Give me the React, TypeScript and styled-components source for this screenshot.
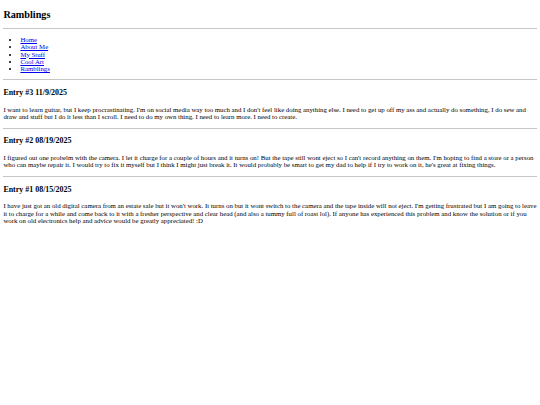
import React from "react";
import styled, { createGlobalStyle } from "styled-components";

const Global = createGlobalStyle`
  html, body { margin: 0; padding: 0; background: #ffffff; }
  body { font-family: "Liberation Serif", "Times New Roman", serif; color: #000; }
`;

const Page = styled.main`
  padding: 0 3.4px;
  font-size: 6.8px;
  line-height: 1.08;
  display: flow-root;
`;

const Title = styled.h2`
  font-size: 10.2px;
  font-weight: bold;
  margin: 8.5px 0;
`;

const Rule = styled.hr`
  border: none;
  border-top: 1px solid #c6c6c6;
  margin: 3.4px 0;
  height: 0;
`;

const NavList = styled.ul`
  margin: 6.9px 0;
  padding-left: 17px;
  list-style: disc;
`;

const NavItem = styled.li``;

const NavLink = styled.a`
  color: #0000ee;
  text-decoration: underline;
`;

const EntryTitle = styled.h3`
  font-size: 7.96px;
  font-weight: bold;
  margin: 8.9px 0 8.1px;
`;

const EntryText = styled.p`
  margin: 6.9px 0;
`;

const links = ["Home", "About Me", "My Stuff", "Cool Art", "Ramblings"];

const entries = [
  {
    title: "Entry #3 11/9/2025",
    text: "I want to learn guitar, but I keep procrastinating. I'm on social media way too much and I don't feel like doing anything else. I need to get up off my ass and actually do something, I do sew and draw and stuff but I do it less than I scroll. I need to do my own thing. I need to learn more. I need to create.",
  },
  {
    title: "Entry #2 08/19/2025",
    text: "I figured out one probelm with the camera. I let it charge for a couple of hours and it turns on! But the tape still wont eject so I can't record anything on them. I'm hoping to find a store or a person who can maybe repair it. I would try to fix it myself but I think I might just break it. It would probably be smart to get my dad to help if I try to work on it, he's great at fixing things.",
  },
  {
    title: "Entry #1 08/15/2025",
    text: "I have just got an old digital camera from an estate sale but it won't work. It turns on but it wont switch to the camera and the tape inside will not eject. I'm getting frustrated but I am going to leave it to charge for a while and come back to it with a fresher perspective and clear head (and also a tummy full of roast lol). If anyone has experienced this problem and know the solution or if you work on old electronics help and advice would be greatly appreciated! :D",
  },
];

export default function App() {
  return (
    <>
      <Global />
      <Page>
        <Title>Ramblings</Title>
        <Rule />
        <NavList>
          {links.map((l) => (
            <NavItem key={l}>
              <NavLink href="#">{l}</NavLink>
            </NavItem>
          ))}
        </NavList>
        {entries.map((e) => (
          <React.Fragment key={e.title}>
            <Rule />
            <EntryTitle>{e.title}</EntryTitle>
            <EntryText>{e.text}</EntryText>
          </React.Fragment>
        ))}
      </Page>
    </>
  );
}
